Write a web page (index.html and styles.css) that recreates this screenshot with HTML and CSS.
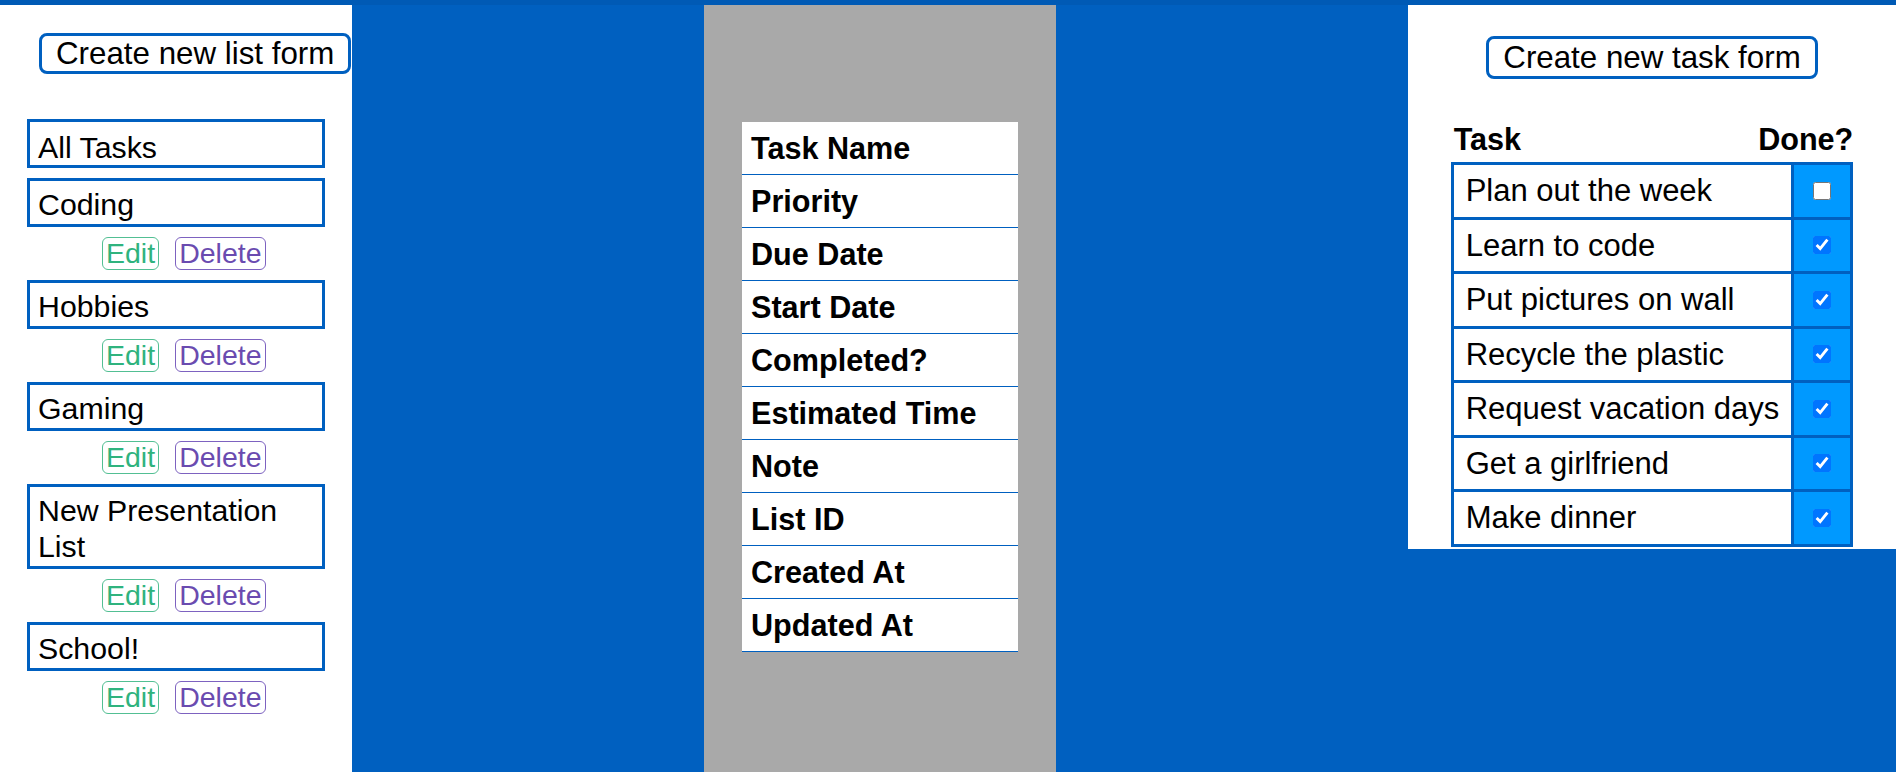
FILE: index.html
```html
<!DOCTYPE html>
<html lang="en">
<head>
<meta charset="utf-8">
<title>Todo Lists</title>
<link rel="stylesheet" href="styles.css">
</head>
<body>
<div class="topbar"></div>
<main class="layout">
  <aside class="lists-panel">
    <button class="form-btn form-btn--list">Create new list form</button>
    <ul class="lists">
      <li class="list-item"><div class="list-name list-name--all">All Tasks</div></li>
      <li class="list-item">
        <div class="list-name">Coding</div>
        <div class="list-actions"><button class="edit-btn">Edit</button><button class="delete-btn">Delete</button></div>
      </li>
      <li class="list-item">
        <div class="list-name">Hobbies</div>
        <div class="list-actions"><button class="edit-btn">Edit</button><button class="delete-btn">Delete</button></div>
      </li>
      <li class="list-item">
        <div class="list-name">Gaming</div>
        <div class="list-actions"><button class="edit-btn">Edit</button><button class="delete-btn">Delete</button></div>
      </li>
      <li class="list-item">
        <div class="list-name">New Presentation List</div>
        <div class="list-actions"><button class="edit-btn">Edit</button><button class="delete-btn">Delete</button></div>
      </li>
      <li class="list-item">
        <div class="list-name">School!</div>
        <div class="list-actions"><button class="edit-btn">Edit</button><button class="delete-btn">Delete</button></div>
      </li>
    </ul>
  </aside>
  <div class="spacer"></div>
  <section class="details-panel">
    <ul class="fields">
      <li class="field">Task Name</li>
      <li class="field">Priority</li>
      <li class="field">Due Date</li>
      <li class="field">Start Date</li>
      <li class="field">Completed?</li>
      <li class="field">Estimated Time</li>
      <li class="field">Note</li>
      <li class="field">List ID</li>
      <li class="field">Created At</li>
      <li class="field">Updated At</li>
    </ul>
  </section>
  <div class="spacer"></div>
  <section class="tasks-panel">
    <button class="form-btn form-btn--task">Create new task form</button>
    <div class="tasks">
      <div class="tasks-head"><span>Task</span><span>Done?</span></div>
      <table class="task-table">
        <tbody>
          <tr><td class="task-name">Plan out the week</td><td class="task-done"><input type="checkbox"></td></tr>
          <tr><td class="task-name">Learn to code</td><td class="task-done"><input type="checkbox" checked></td></tr>
          <tr><td class="task-name">Put pictures on wall</td><td class="task-done"><input type="checkbox" checked></td></tr>
          <tr><td class="task-name">Recycle the plastic</td><td class="task-done"><input type="checkbox" checked></td></tr>
          <tr><td class="task-name">Request vacation days</td><td class="task-done"><input type="checkbox" checked></td></tr>
          <tr><td class="task-name">Get a girlfriend</td><td class="task-done"><input type="checkbox" checked></td></tr>
          <tr><td class="task-name">Make dinner</td><td class="task-done"><input type="checkbox" checked></td></tr>
        </tbody>
      </table>
    </div>
  </section>
</main>
</body>
</html>
```
FILE: styles.css
```css
* {
  box-sizing: border-box;
}

html, body {
  margin: 0;
  padding: 0;
}

body {
  background: #0060c0;
  font-family: "Liberation Sans", Arial, sans-serif;
  color: #000;
  height: 100vh;
  overflow: hidden;
}

.topbar {
  height: 5px;
  background: #005ab5;
}

.layout {
  display: grid;
  grid-template-columns: 352px 352px 352px 352px 1fr;
  height: calc(100vh - 5px);
}

/* ---------- left: lists ---------- */
.lists-panel {
  background: #fff;
  display: flex;
  flex-direction: column;
  align-items: flex-start;
}

.form-btn {
  font-family: "Liberation Sans", Arial, sans-serif;
  font-size: 31.3px;
  color: #000;
  background: #fff;
  border: 3px solid #0060c0;
  border-radius: 8px;
  padding: 0 14px;
  margin: 0;
  white-space: nowrap;
  flex-shrink: 0;
  cursor: pointer;
}

.form-btn--list {
  margin: 28px 0 0 39px;
  line-height: 35px;
}

.form-btn--task {
  margin-top: 31px;
  line-height: 37px;
}

.lists {
  list-style: none;
  margin: 45px 0 0 27px;
  padding: 0;
  width: 298px;
  display: flex;
  flex-direction: column;
  gap: 10px;
}

.list-item {
  display: flex;
  flex-direction: column;
  gap: 10px;
}

.list-name {
  border: 3px solid #0060c0;
  padding: 6px 8px 1px 8px;
  font-size: 30.3px;
  line-height: 36px;
}

.list-name--all {
  padding-top: 8px;
  padding-bottom: 0;
  line-height: 35px;
}

.list-actions {
  display: flex;
  gap: 16px;
  padding-left: 75px;
}

.edit-btn,
.delete-btn {
  font-family: "Liberation Sans", Arial, sans-serif;
  font-size: 28.5px;
  line-height: 31px;
  padding: 0 3px;
  margin: 0;
  background: #fff;
  border-radius: 6px;
  cursor: pointer;
}

.edit-btn {
  color: #2fb37e;
  border: 1px solid #52bf93;
}

.delete-btn {
  color: #6a4bb0;
  border: 1px solid #7d62c0;
}

/* ---------- middle: details ---------- */
.details-panel {
  background: #a9a9a9;
  display: flex;
  justify-content: center;
  align-items: flex-start;
}

.fields {
  list-style: none;
  margin: 117px 0 0 0;
  padding: 0;
  width: 276px;
  background: #fff;
}

.field {
  font-size: 30.6px;
  font-weight: bold;
  line-height: 34px;
  padding: 9px 9px;
  border-bottom: 1px solid #0060c0;
}

/* ---------- right: tasks ---------- */
.tasks-panel {
  background: #fff;
  align-self: start;
  display: flex;
  flex-direction: column;
  align-items: center;
  padding-bottom: 2px;
}

.tasks {
  margin-top: 43px;
  display: flex;
  flex-direction: column;
}

.tasks-head {
  display: flex;
  justify-content: space-between;
  font-size: 30.6px;
  font-weight: bold;
  line-height: 35px;
  padding-left: 3px;
  margin-bottom: 5px;
}

.task-table {
  border-collapse: collapse;
  border: 3px solid #0060c0;
}

.task-table td {
  border: 3px solid #0060c0;
}

.task-name {
  font-size: 31px;
  line-height: 35.5px;
  padding: 8px 12px;
  white-space: nowrap;
}

.task-done {
  background: #0099ff;
  padding: 0 19px;
  vertical-align: middle;
  text-align: center;
}

.task-done input {
  width: 18px;
  height: 18px;
  margin: 0;
  display: block;
}
```
